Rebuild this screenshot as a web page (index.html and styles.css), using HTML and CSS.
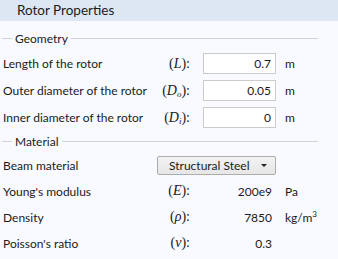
FILE: index.html
```html
<!DOCTYPE html>
<html lang="en">
<head>
<meta charset="UTF-8">
<title>Rotor Properties</title>
<link rel="stylesheet" href="styles.css">
</head>
<body>
<div class="panel">
    <div class="title">Rotor Properties</div>

    <div class="section-head geo-head"><span>Geometry</span></div>
    <div class="rows geo">
        <span class="label">Length of the rotor</span>
        <span class="sym">(<i>L</i>):</span>
        <input type="text" class="field" value="0.7">
        <span class="unit">m</span>

        <span class="label">Outer diameter of the rotor</span>
        <span class="sym">(<i>D</i><sub><i>o</i></sub>):</span>
        <input type="text" class="field" value="0.05">
        <span class="unit">m</span>

        <span class="label">Inner diameter of the rotor</span>
        <span class="sym">(<i>D</i><sub><i>i</i></sub>):</span>
        <input type="text" class="field" value="0">
        <span class="unit">m</span>
    </div>

    <div class="section-head mat-head"><span>Material</span></div>
    <div class="rows mat">
        <span class="label">Beam material</span>
        <div class="select">Structural Steel<span class="arrow"></span></div>
        <span class="unit"></span>

        <span class="label">Young's modulus</span>
        <span class="sym">(<i>E</i>):</span>
        <span class="value">200e9</span>
        <span class="unit">Pa</span>

        <span class="label">Density</span>
        <span class="sym">(<i>ρ</i>):</span>
        <span class="value">7850</span>
        <span class="unit">kg/m<sup>3</sup></span>

        <span class="label">Poisson's ratio</span>
        <span class="sym">(<i>ν</i>):</span>
        <span class="value">0.3</span>
        <span class="unit"></span>
    </div>
</div>
</body>
</html>
```

FILE: styles.css
```css
body {
    margin: 0;
    background-color: #f8faff;
    font-family: Lato, "Noto Sans", sans-serif;
    font-size: 12px;
    color: #1b1b1b;
}
.title {
    height: 21px;
    line-height: 21px;
    padding-left: 17px;
    font-size: 13.5px;
    background-color: #dde7f3;
}
.section-head {
    display: flex;
    align-items: center;
    gap: 3px;
    height: 20px;
    padding: 0 20px 0 2px;
}
.section-head::before {
    content: "";
    width: 10px;
    border-top: 1px solid #d3d3d3;
}
.section-head::after {
    content: "";
    flex: 1;
    border-top: 1px solid #d3d3d3;
}
.geo-head {
    margin-top: 7px;
}
.rows {
    display: grid;
    grid-template-columns: 152px 36px 85px 1fr;
    align-items: center;
    padding-left: 3px;
}
.geo {
    margin-top: 2px;
    grid-auto-rows: 27px;
}
.mat {
    margin-top: 1px;
    grid-auto-rows: 26px;
}
.label {
    white-space: nowrap;
}
.sym {
    text-align: right;
    white-space: nowrap;
    padding-right: 1px;
    font-family: "Liberation Serif", serif;
    font-size: 14px;
}
.sym sub {
    font-size: 9px;
    vertical-align: -2px;
}
.field {
    justify-self: end;
    width: 73px;
    height: 21px;
    box-sizing: border-box;
    padding: 0 4px;
    border: 1px solid #cbcbcb;
    border-radius: 0;
    background-color: #fff;
    font-family: inherit;
    font-size: 12px;
    color: inherit;
    text-align: right;
    outline: none;
}
.value {
    text-align: right;
    padding-right: 4px;
}
.unit {
    padding-left: 9px;
    white-space: nowrap;
}
.unit sup {
    font-size: 8px;
    vertical-align: 5px;
}
.select {
    grid-column: 2 / 4;
    position: relative;
    margin-left: 2px;
    height: 19px;
    line-height: 17px;
    box-sizing: border-box;
    padding-left: 11px;
    border: 1px solid #adadad;
    border-radius: 2px;
    background: linear-gradient(#f2f2f2, #e6e6e6);
}
.arrow {
    position: absolute;
    right: 8px;
    top: 7px;
    border-left: 3px solid transparent;
    border-right: 3px solid transparent;
    border-top: 3px solid #222;
}
```
